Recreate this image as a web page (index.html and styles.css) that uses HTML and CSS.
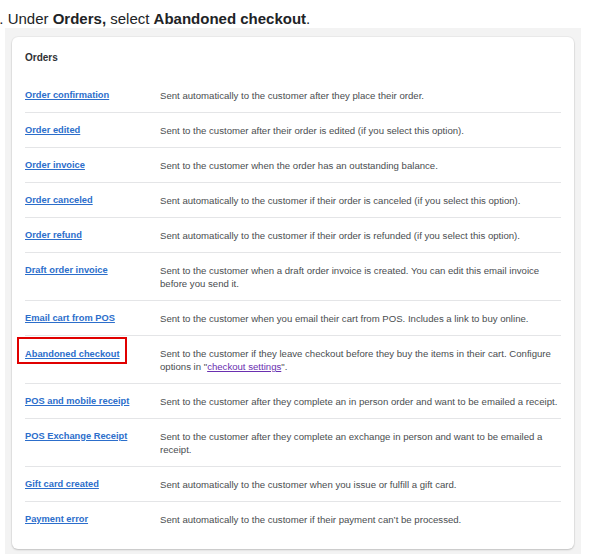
FILE: index.html
```html
<!DOCTYPE html>
<html>
<head>
<meta charset="utf-8">
<link rel="stylesheet" href="styles.css">
</head>
<body>
<p class="step">1. Under <b>Orders,</b> select <b>Abandoned checkout</b>.</p>
<div class="panel">
  <div class="card">
    <h2 class="card-title">Orders</h2>
    <div class="rows">
      <div class="row"><a class="name" href="#">Order confirmation</a><span class="desc">Sent automatically to the customer after they place their order.</span></div>
      <div class="row"><a class="name" href="#">Order edited</a><span class="desc">Sent to the customer after their order is edited (if you select this option).</span></div>
      <div class="row"><a class="name" href="#">Order invoice</a><span class="desc">Sent to the customer when the order has an outstanding balance.</span></div>
      <div class="row"><a class="name" href="#">Order canceled</a><span class="desc">Sent automatically to the customer if their order is canceled (if you select this option).</span></div>
      <div class="row"><a class="name" href="#">Order refund</a><span class="desc">Sent automatically to the customer if their order is refunded (if you select this option).</span></div>
      <div class="row"><a class="name" href="#">Draft order invoice</a><span class="desc">Sent to the customer when a draft order invoice is created. You can edit this email invoice before you send it.</span></div>
      <div class="row"><a class="name" href="#">Email cart from POS</a><span class="desc">Sent to the customer when you email their cart from POS. Includes a link to buy online.</span></div>
      <div class="row"><span class="name-wrap"><a class="name" href="#">Abandoned checkout</a><span class="highlight"></span></span><span class="desc">Sent to the customer if they leave checkout before they buy the items in their cart. Configure options in "<a class="visited" href="#">checkout settings</a>".</span></div>
      <div class="row"><a class="name" href="#">POS and mobile receipt</a><span class="desc">Sent to the customer after they complete an in person order and want to be emailed a receipt.</span></div>
      <div class="row"><a class="name" href="#">POS Exchange Receipt</a><span class="desc">Sent to the customer after they complete an exchange in person and want to be emailed a receipt.</span></div>
      <div class="row"><a class="name" href="#">Gift card created</a><span class="desc">Sent automatically to the customer when you issue or fulfill a gift card.</span></div>
      <div class="row"><a class="name" href="#">Payment error</a><span class="desc">Sent automatically to the customer if their payment can’t be processed.</span></div>
    </div>
  </div>
</div>
</body>
</html>
```
FILE: styles.css
```css
html, body {
  margin: 0;
  padding: 0;
  background: #ffffff;
  overflow: hidden;
}
body {
  font-family: "Liberation Sans", Arial, sans-serif;
  color: #202223;
}
.step {
  margin: 0 0 0 -9px;
  height: 28px;
  padding-top: 10px;
  box-sizing: border-box;
  font-size: 15px;
  line-height: 17px;
  color: #212326;
  white-space: nowrap;
}
.step b {
  font-weight: 600;
}
.panel {
  margin-left: 5px;
  width: 576px;
  box-sizing: border-box;
  background: #f3f3f3;
  padding: 9px 7px 5px 7px;
}
.card {
  background: #ffffff;
  border-radius: 6px;
  box-shadow: 0 1px 2px rgba(0, 0, 0, 0.18), 0 0 0 1px rgba(0, 0, 0, 0.03);
  padding: 14px 13px 13px 13px;
}
.card-title {
  margin: 0 0 14px 0;
  font-size: 10px;
  line-height: 13px;
  font-weight: 600;
  color: #303235;
}
.row {
  display: grid;
  grid-template-columns: 135px 1fr;
  padding: 11px 0 10px 0;
  border-bottom: 1px solid #e4e5e7;
  font-size: 9.6px;
  line-height: 13px;
}
.row:last-child {
  border-bottom: none;
}
.name {
  color: #2c6ecb;
  font-weight: 600;
  font-size: 9.3px;
  text-decoration: underline;
  justify-self: start;
}
.name-wrap {
  position: relative;
  justify-self: start;
  line-height: 13px;
}
.highlight {
  position: absolute;
  left: -8px;
  top: -10px;
  width: 110px;
  height: 27px;
  box-sizing: border-box;
  border: 2.5px solid #e00000;
}
.desc {
  color: #4a4d50;
}
.visited {
  color: #6a2fb0;
  text-decoration: underline;
}
```
